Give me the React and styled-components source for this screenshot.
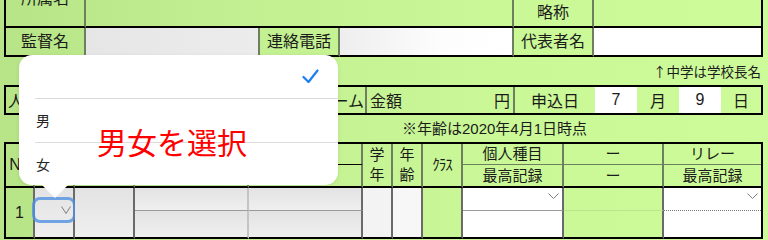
import React from 'react';
import styled, { createGlobalStyle } from 'styled-components';

const GlobalStyle = createGlobalStyle`
  html, body {
    margin: 0;
    padding: 0;
  }
  body {
    width: 768px;
    height: 240px;
    overflow: hidden;
    font-family: "Liberation Sans", "Noto Sans CJK JP", sans-serif;
    color: #1b1b1b;
    background: linear-gradient(90deg, #b7e486 0%, #c2ef91 30%, #caf897 65%, #cdfb9a 100%);
  }
`;

const GRID_LINE = '2px solid #6e7f60';
const DATA_LINE = '2px solid #6a6a6a';
const BLACK = '2px solid #000';

const Page = styled.div`
  position: relative;
  width: 768px;
  height: 240px;
  overflow: hidden;
`;

// page is scrolled down a little, the first row is cut off
const Sheet = styled.div`
  margin-top: -31px;
  padding: 0 5px 0 4px;
`;

const InfoGrid = styled.div`
  display: grid;
  grid-template-columns: 80px 174px 80px 174px 80px 1fr;
  grid-template-rows: 28px 29px 29px;
  border: ${BLACK};
  border-bottom: none;
`;

const Cell = styled.div`
  box-sizing: border-box;
  display: flex;
  align-items: center;
  justify-content: ${p => p.$justify || 'center'};
  grid-column: ${p => p.$col};
  grid-row: ${p => p.$row};
  font-size: ${p => p.$size || 16}px;
  line-height: 1.2;
  white-space: nowrap;
  overflow: hidden;
  border-right: ${p => (p.$last ? 'none' : p.$line || GRID_LINE)};
  border-bottom: ${p => p.$bottom || 'none'};
  background: ${p => p.$bg || 'transparent'};
`;

const Note = styled.div`
  height: 28px;
  line-height: 28px;
  text-align: right;
  font-family: "Noto Sans CJK JP", sans-serif;
  font-size: 13.5px;
  padding-right: 2px;
`;

const FeeRow = styled.div`
  box-sizing: border-box;
  height: 30px;
  display: grid;
  grid-template-columns: 80px 201px 80px 148px 80px 42px 42px 42px 1fr;
  border: ${BLACK};
`;

const FeeCell = styled.div`
  display: flex;
  align-items: center;
  justify-content: ${p => p.$justify || 'center'};
  padding: 0 ${p => p.$pad ?? 3}px;
  font-size: 16px;
  white-space: nowrap;
  overflow: hidden;
  border-right: ${p => (p.$line ? GRID_LINE : 'none')};
  background: ${p => (p.$white ? '#fff' : 'transparent')};
`;

const AgeNote = styled.div`
  height: 27px;
  line-height: 27px;
  padding-left: 398px;
  font-size: 15px;
`;

const EntryGrid = styled.div`
  display: grid;
  grid-template-columns: 29px 40px 60px 114px 114px 30px 30px 40px 101px 100px 1fr;
  grid-template-rows: 21px 23px 23px 28px;
  border: ${BLACK};
  border-bottom: none;
`;

const Stack = styled.span`
  font-size: 15px;
  line-height: 20px;
  text-align: center;
  white-space: normal;
  width: 1em;
`;

const Narrow = styled.span`
  font-size: 15px;
  letter-spacing: -1px;
`;

const GRAY = 'linear-gradient(180deg, #e3e3e3 0%, #efefef 100%)';

const SelectCell = styled(Cell)`
  align-items: flex-start;
  justify-content: flex-start;
  overflow: visible;
  padding-top: 12px;
`;

const SexSelect = styled.div`
  box-sizing: border-box;
  width: 38px;
  height: 20px;
  border-radius: 5px;
  box-shadow: 0 0 0 3px rgba(80, 145, 225, 0.8);
  display: flex;
  align-items: center;
  justify-content: flex-end;
  padding-right: 2px;
`;

const PickCell = styled(Cell)`
  align-items: flex-start;
  justify-content: flex-end;
  padding: 5px 3px 0 0;
`;

const Chevron = ({ w = 11, h = 6 }) => (
  <svg width={w} height={h} viewBox={`0 0 ${w} ${h}`}>
    <polyline
      points={`0.5,0.5 ${w / 2},${h - 0.5} ${w - 0.5},0.5`}
      fill="none"
      stroke="#7d7d7d"
      strokeWidth="1"
    />
  </svg>
);

const Picker = styled.div`
  position: absolute;
  left: 19px;
  top: 55px;
  width: 319px;
  height: 130px;
  background: #fff;
  border-radius: 13px;
  box-shadow: 0 1px 4px rgba(0, 0, 0, 0.08);
  display: flex;
  flex-direction: column;

  &::after {
    content: '';
    position: absolute;
    left: 23px;
    bottom: -13px;
    border-left: 13px solid transparent;
    border-right: 13px solid transparent;
    border-top: 13px solid #fff;
  }
`;

const Option = styled.div`
  flex: ${p => (p.$first ? '0 0 43px' : '1')};
  margin-left: 16px;
  padding: 0 19px 0 1px;
  display: flex;
  align-items: center;
  justify-content: ${p => (p.$checked ? 'flex-end' : 'flex-start')};
  font-family: "Noto Sans CJK JP", sans-serif;
  font-size: 14px;
  color: #222;

  & + & {
    border-top: 1px solid #dcdcdc;
  }
`;

const Callout = styled.div`
  position: absolute;
  left: 97px;
  top: 126px;
  font-family: "Noto Sans CJK JP", sans-serif;
  font-size: 30px;
  line-height: 1;
  color: #ff0000;
`;

const Check = () => (
  <svg width="17" height="15" viewBox="0 0 17 15">
    <polyline points="1.5,8 6.5,13 15.5,1.5" fill="none" stroke="#1a7ff5" strokeWidth="2.2" strokeLinecap="round" strokeLinejoin="round" />
  </svg>
);

const App = () => (
  <Page>
    <GlobalStyle />
    <Sheet>
      <InfoGrid>
        <Cell $col="1" $row="1 / 3" $bottom={BLACK}>所属名</Cell>
        <Cell $col="2 / 5" $row="1 / 3" $bottom={BLACK} />
        <Cell $col="5" $row="1" />
        <Cell $col="6" $row="1" $last />
        <Cell $col="5" $row="2" $bottom={BLACK}>略称</Cell>
        <Cell $col="6" $row="2" $last $bottom={BLACK} />

        <Cell $col="1" $row="3" $bottom={BLACK}>監督名</Cell>
        <Cell $col="2" $row="3" $bottom={BLACK} $bg="linear-gradient(90deg, #e6e6e6, #ececec)" />
        <Cell $col="3" $row="3" $bottom={BLACK}>連絡電話</Cell>
        <Cell $col="4" $row="3" $bottom={BLACK} $bg="linear-gradient(90deg, #eeeeee, #fdfdfd 60%, #fff)" />
        <Cell $col="5" $row="3" $bottom={BLACK}>代表者名</Cell>
        <Cell $col="6" $row="3" $last $bottom={BLACK} $bg="#fff" />
      </InfoGrid>

      <Note>↑中学は学校長名</Note>

      <FeeRow>
        <FeeCell $line $justify="flex-start" $pad={2}>人数</FeeCell>
        <FeeCell $line />
        <FeeCell $line $justify="flex-end" $pad={1}>リレーチーム</FeeCell>
        <FeeCell $line $justify="space-between">
          <span>金額</span>
          <span>円</span>
        </FeeCell>
        <FeeCell>申込日</FeeCell>
        <FeeCell $white>7</FeeCell>
        <FeeCell>月</FeeCell>
        <FeeCell $white>9</FeeCell>
        <FeeCell>日</FeeCell>
      </FeeRow>

      <AgeNote>※年齢は2020年4月1日時点</AgeNote>

      <EntryGrid>
        <Cell $col="1" $row="1 / 3" $bottom={BLACK}>No</Cell>
        <Cell $col="2" $row="1 / 3" $bottom={BLACK}>性別</Cell>
        <Cell $col="3" $row="1 / 3" $bottom={BLACK}>学校</Cell>
        <Cell $col="4" $row="1" $size={14} $bottom="1px solid #000">フリガナ</Cell>
        <Cell $col="5" $row="1" $size={14} $bottom="1px solid #000">フリガナ</Cell>
        <Cell $col="4" $row="2" $size={15} $bottom={BLACK}>姓</Cell>
        <Cell $col="5" $row="2" $size={15} $bottom={BLACK}>名</Cell>
        <Cell $col="6" $row="1 / 3" $bottom={BLACK}><Stack>学年</Stack></Cell>
        <Cell $col="7" $row="1 / 3" $bottom={BLACK}><Stack>年齢</Stack></Cell>
        <Cell $col="8" $row="1 / 3" $bottom={BLACK}><Narrow>ｸﾗｽ</Narrow></Cell>
        <Cell $col="9" $row="1" $size={15} $bottom="1px solid #6e7f60">個人種目</Cell>
        <Cell $col="9" $row="2" $size={15} $bottom={BLACK}>最高記録</Cell>
        <Cell $col="10" $row="1" $size={15} $bottom="1px solid #6e7f60">ー</Cell>
        <Cell $col="10" $row="2" $size={15} $bottom={BLACK}>ー</Cell>
        <Cell $col="11" $row="1" $size={15} $last $bottom="1px solid #6e7f60">リレー</Cell>
        <Cell $col="11" $row="2" $size={15} $last $bottom={BLACK}>最高記録</Cell>

        <Cell $col="1" $row="3 / 5" $line={DATA_LINE} $bottom={BLACK}>1</Cell>
        <SelectCell $col="2" $row="3 / 5" $line={DATA_LINE} $bottom={BLACK} $bg={GRAY}>
          <SexSelect><Chevron w={10} h={8} /></SexSelect>
        </SelectCell>
        <Cell $col="3" $row="3 / 5" $line={DATA_LINE} $bottom={BLACK} $bg={GRAY} />
        <Cell $col="4" $row="3" $line="2px solid #c4c4c4" $bottom="1px solid #9a9a9a" $bg={GRAY} />
        <Cell $col="4" $row="4" $line="2px solid #c4c4c4" $bottom={BLACK} $bg={GRAY} />
        <Cell $col="5" $row="3" $line={DATA_LINE} $bottom="1px solid #9a9a9a" $bg={GRAY} />
        <Cell $col="5" $row="4" $line={DATA_LINE} $bottom={BLACK} $bg={GRAY} />
        <Cell $col="6" $row="3 / 5" $line={DATA_LINE} $bottom={BLACK} $bg="#f3f3f3" />
        <Cell $col="7" $row="3 / 5" $line={DATA_LINE} $bottom={BLACK} $bg="#f7f7f7" />
        <Cell $col="8" $row="3 / 5" $line={DATA_LINE} $bottom={BLACK} />
        <PickCell $col="9" $row="3" $line={DATA_LINE} $bottom="1px solid #9a9a9a" $bg="#fff">
          <Chevron />
        </PickCell>
        <Cell $col="9" $row="4" $line={DATA_LINE} $bottom={BLACK} $bg="#fff" />
        <Cell $col="10" $row="3" $line={DATA_LINE} $bottom="1px solid rgba(0,0,0,0.08)" />
        <Cell $col="10" $row="4" $line={DATA_LINE} $bottom={BLACK} />
        <PickCell $col="11" $row="3" $last $bottom="1px dotted #7a7a7a" $bg="#fff">
          <Chevron />
        </PickCell>
        <Cell $col="11" $row="4" $last $bottom={BLACK} $bg="#fff" />
      </EntryGrid>
    </Sheet>

    <Picker>
      <Option $first $checked><Check /></Option>
      <Option>男</Option>
      <Option>女</Option>
    </Picker>
    <Callout>男女を選択</Callout>
  </Page>
);

export default App;
